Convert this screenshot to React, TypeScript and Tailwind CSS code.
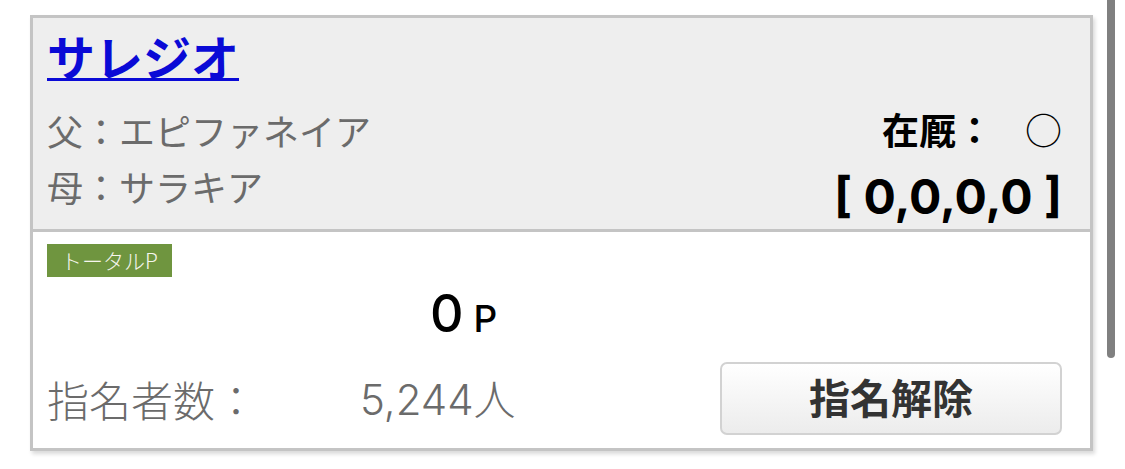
const jp = "font-['Noto_Sans_CJK_JP','Noto_Sans',sans-serif]";
const num = "font-['Inter','Noto_Sans_CJK_JP',sans-serif]";

export default function App() {
  return (
    <div className={`relative h-[469px] w-[1125px] overflow-hidden bg-white ${jp}`}>
      <div className="pl-[30px] pt-[15px]">
        <div className="w-[1063px] border-[3px] border-[#c4c4c4] shadow-[2px_3px_4px_rgba(0,0,0,0.15)]">
          {/* horse header */}
          <div className="grid grid-cols-[1fr_auto] border-b-[3px] border-[#c4c4c4] bg-[#eeeeee]">
            <div className="pl-[14px] pt-[12px] pb-[15px]">
              <a
                href="#"
                className="block h-[50px] text-[48px] leading-[50px] font-bold text-[#0a0ad6] underline decoration-[3px]"
              >
                サレジオ
              </a>
              <div className="mt-[22px] text-[36px] leading-[56px] text-[#6b6b6b]">父：エピファネイア</div>
              <div className="text-[36px] leading-[56px] text-[#6b6b6b]">母：サラキア</div>
            </div>
            <div className="flex flex-col items-end justify-end gap-[12px] pr-[28px] pb-[4px]">
              <div className="text-[37px] leading-[56px] font-bold text-black">
                在厩：<span className="ml-[32px] font-normal">○</span>
              </div>
              <div className={`${num} text-[48px] leading-[56px] font-bold text-black`}>[ 0,0,0,0 ]</div>
            </div>
          </div>

          {/* points */}
          <div className="bg-white pt-[12px] pb-[13px]">
            <div className="pl-[14px]">
              <span className="inline-block h-[33px] bg-[#6f953f] px-[14px] text-[21px] leading-[33px] font-light text-[#f6f6ee]">
                トータルP
              </span>
            </div>
            <div className={`${num} mt-[11px] flex h-[52px] items-baseline pl-[397px] text-black`}>
              <span className="text-[52px] leading-[52px] font-medium">0</span>
              <span className="ml-[10px] text-[37px] leading-[52px] font-medium">P</span>
            </div>
            <div className="mt-[22px] flex items-center pl-[14px] pr-[28px]">
              <div className="w-[313px] text-[42px] leading-[56px] font-light text-[#6b6b6b]">指名者数：</div>
              <div className={`${num} flex-1 text-[42px] leading-[56px] font-light text-[#6b6b6b]`}>
                5,244<span className={jp}>人</span>
              </div>
              <button className="flex h-[73px] w-[342px] items-center justify-center rounded-[7px] border-2 border-[#d2d2d2] bg-gradient-to-b from-white to-[#ececec] pb-[4px] text-[41px] font-bold text-[#333333]">
                指名解除
              </button>
            </div>
          </div>
        </div>
      </div>

      {/* scrollbar */}
      <div className="absolute right-[10px] top-0 h-[358px] w-[8px] rounded-b-full bg-[#808080]" />
    </div>
  );
}
